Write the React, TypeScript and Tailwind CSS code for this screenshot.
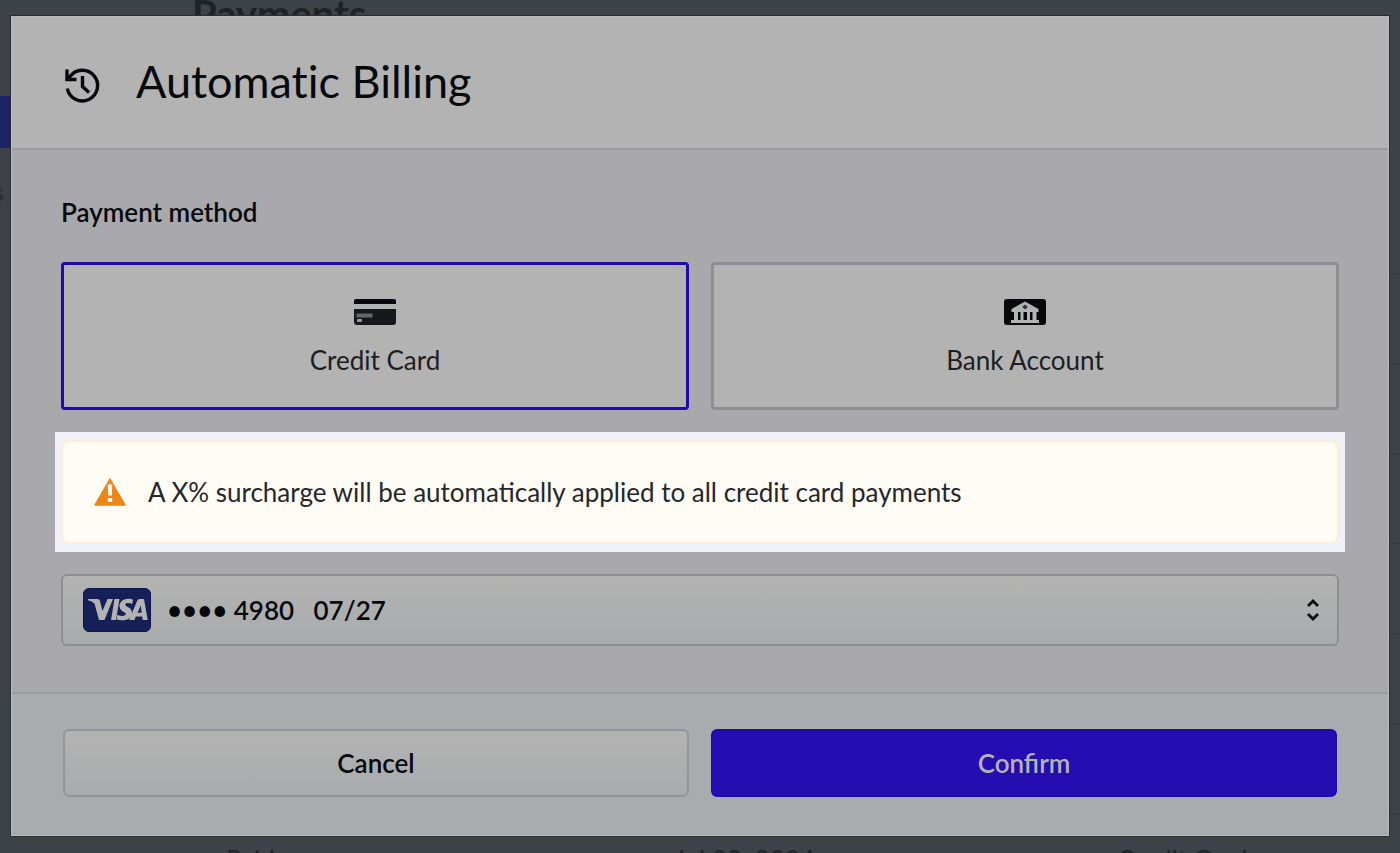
import React, { useState } from 'react';

type Method = 'card' | 'bank';

interface Option {
    id: Method;
    label: string;
    icon: React.FC;
}

const HistoryIcon: React.FC = () => (
    <svg className="w-10 h-10" viewBox="0 0 40 40" fill="none" stroke="currentColor" strokeWidth="3.400" aria-hidden="true">
        <path d="M5.300 23.500A15.300 15.300 0 1 0 8 11.500L5.500 14.300" />
        <path d="M5 4.500V14.500H14.500" />
        <path d="M20.500 11v10.500l6.500 6" />
    </svg>
);

const CardIcon: React.FC = () => (
    <svg className="w-11 h-7" viewBox="0 0 44 28" aria-hidden="true">
        <path d="M3 1h38q2 0 2 2v3H1V3q0-2 2-2z" fill="#08090d" />
        <path d="M1 11h42v13q0 3-3 3H4q-3 0-3-3z" fill="#16181d" />
        <path d="M3.500 15.500h16v4h-16z" fill="#65666a" />
        <rect x="4" y="21" width="5" height="3" rx="1" fill="#9b9b9b" />
    </svg>
);

const BankIcon: React.FC = () => (
    <svg className="w-11 h-7" viewBox="0 0 44 28" aria-hidden="true">
        <rect x="1" y="1" width="42" height="26" rx="3" fill="#08090d" />
        <path d="M22 3.500L35.500 11v3h-27v-3z" fill="#b3b3b3" />
        <path d="M11 14h4v8h-4zM17.500 14h3v8h-3zM24 14h3v8h-3zM29.500 14h4v8h-4zM8 22h28v3H8z" fill="#b3b3b3" />
        <path d="M22 6.500l2.800 2.500-2.800 2.500-2.800-2.500z" fill="#33343a" />
    </svg>
);

const VisaLogo: React.FC = () => (
    <span className="w-[68px] h-11 rounded-md bg-[#142057] border border-[#0b1550] flex items-center justify-center">
        <svg className="w-16 h-7" viewBox="0 0 64 28" role="img" aria-label="Visa">
            <g fill="#b3b3b3">
                <path d="M3 3h9.500q2 0 2.500 2l2.500 10L22.500 3h5.500L19.500 24H14L9.500 7.500Q7 5 3 4.200z" />
                <path d="M29.500 3h5L31 24h-5z" />
                <path d="M48 3.700l-.8 4.300q-2.200-.9-4-.9c-2 0-2.900.7-2.900 1.600 0 2.200 6.700 2.300 6.700 8 0 4.700-3.700 7.600-9.500 7.600-2.500 0-4.500-.5-5.900-1.100l.8-4.500q2.600 1.300 5.100 1.300c2.200 0 3.300-.8 3.300-1.900 0-2.200-6.300-2.700-6.300-8 0-4.300 3.800-7.400 9-7.400 2 0 3.500.4 4.500 1z" />
                <path fillRule="evenodd" d="M54.500 3H59l3.700 21h-4.900l-.6-3.400h-6.400L49.400 24h-5.300l8.200-19.400Q53 3 54.500 3zM55.800 9.500l-3.300 7.300h4.200z" />
            </g>
        </svg>
    </span>
);

const WarningIcon: React.FC = () => (
    <svg className="w-8 h-7 shrink-0" viewBox="0 0 32 28" aria-hidden="true">
        <path d="M16 1L31 27H1z" fill="#ec8717" stroke="#ec8717" strokeWidth="1.500" strokeLinejoin="round" />
        <path d="M13.800 6.500h4.400l-.4 11h-3.600zM13.800 20h4.400v4h-4.400z" fill="#fffcf5" />
    </svg>
);

const options: Option[] = [
    { id: 'card', label: 'Credit Card', icon: CardIcon },
    { id: 'bank', label: 'Bank Account', icon: BankIcon },
];

// Dimmed payments page that sits behind the dialog
const PaymentsPage: React.FC = () => (
    <div className="absolute inset-0 overflow-hidden flex bg-[#3d4248]" aria-hidden="true">
        <div className="w-48 shrink-0 pt-24">
            <div className="h-[52px] bg-[#1c2366]" />
            <p className="mt-7 w-1 flex justify-end text-2xl text-[#25282d]">Settings</p>
        </div>
        <div className="flex-1">
            <h1 className="-mt-1.5 h-[279px] text-[40px] leading-10 font-bold text-[#1f2227]">Payments</h1>
            {[0, 1, 2, 3, 4, 5].map((row) => (
                <div key={row} className="h-[90px] border-t border-[#34383e]" />
            ))}
            <div className="grid grid-cols-[448px_443px_1fr] border-t border-[#34383e] pt-7 pl-[34px] text-[26px] leading-9 text-[#1f2227]">
                <span>Paid</span>
                <span>Jul 23, 2024</span>
                <span>Credit Card</span>
            </div>
        </div>
    </div>
);

const AutomaticBilling: React.FC = () => {
    const [method, setMethod] = useState<Method>('card');

    return (
        <div role="dialog" aria-labelledby="billing-title" className="relative w-full bg-[#a9a8ac] border border-[#bcbcbd] outline outline-[#292e35] text-[#08090d]">
            {/* Header */}
            <header className="flex items-center gap-[34px] h-[133px] pt-1 px-[50px] bg-[#b3b3b3] border-b-2 border-[#9a9b9f]">
                <HistoryIcon />
                <h2 id="billing-title" className="pb-1.5 text-[45px] leading-none [font-variant-ligatures:none]">Automatic Billing</h2>
            </header>

            {/* Method, surcharge notice and saved card */}
            <div className="px-[49px] pt-11 pb-[46px]">
                <fieldset>
                    <legend className="text-[26px] leading-9 font-semibold">Payment method</legend>
                    <div className="grid grid-cols-2 gap-[22px] mt-8">
                        {options.map((option) => (
                            <label
                                key={option.id}
                                className={`flex flex-col items-center h-[148px] pt-[33px] rounded border-[3px] bg-[#b3b3b3] cursor-pointer ${method === option.id ? 'border-[#1e0bb0]' : 'border-[#8e8e94]'}`}
                            >
                                <input
                                    type="radio"
                                    name="method"
                                    className="sr-only"
                                    checked={method === option.id}
                                    onChange={() => setMethod(option.id)}
                                />
                                <option.icon />
                                <span className="mt-4 text-[26px] leading-9 text-[#1c1e23]">{option.label}</span>
                            </label>
                        ))}
                    </div>
                </fieldset>

                <div className="-mx-1.5 mt-[22px] px-1.5 py-2 bg-[#eff0f8]">
                    <div role="alert" className="flex items-center gap-[22px] h-[104px] px-[31px] rounded-lg border-2 border-[#ffeed6] bg-[#fffcf5]">
                        <WarningIcon />
                        <p className="text-[26px] leading-9 text-[#25272c]">A X% surcharge will be automatically applied to all credit card payments</p>
                    </div>
                </div>

                <div className="relative mt-[22px]">
                    <select
                        aria-label="Saved card"
                        className="block w-full h-[72px] pl-[104px] pr-16 appearance-none rounded-md border-2 border-[#8c9094] bg-linear-to-b from-[#b3b3b2] to-[#a8abad] text-[26px] font-semibold"
                    >
                        <option>{'•••• 4980\u00a0\u00a0\u00a007/27'}</option>
                    </select>
                    <span className="absolute inset-y-0 left-[22px] flex items-center pointer-events-none">
                        <VisaLogo />
                    </span>
                    <span className="absolute inset-y-0 right-5 flex items-center pointer-events-none">
                        <svg className="w-3 h-6" viewBox="0 0 12 24" fill="none" stroke="#08090d" strokeWidth="2.800" aria-hidden="true">
                            <path d="M1 8l5-5 5 5M1 16l5 5 5-5" />
                        </svg>
                    </span>
                </div>
            </div>

            {/* Actions */}
            <footer className="grid grid-cols-2 gap-[22px] px-[51px] pt-[35px] pb-[38px] border-t-2 border-[#9a9b9f] bg-[#a9abae]">
                <button type="button" className="h-[68px] rounded-md border-2 border-[#929497] bg-linear-to-b from-[#b3b3b2] to-[#a8abad] text-[26px] font-semibold">
                    Cancel
                </button>
                <button type="button" className="h-[68px] rounded-md border-2 border-[#1e0bb0] bg-[#260db2] text-[26px] font-semibold text-[#b3b3b3]">
                    Confirm
                </button>
            </footer>
        </div>
    );
};

const App: React.FC = () => (
    <div className="relative min-h-screen overflow-hidden flex items-start bg-[#3d4248] px-[11px] pt-4 pb-4 font-['Lato',sans-serif]">
        <PaymentsPage />
        <AutomaticBilling />
    </div>
);

export default App;
